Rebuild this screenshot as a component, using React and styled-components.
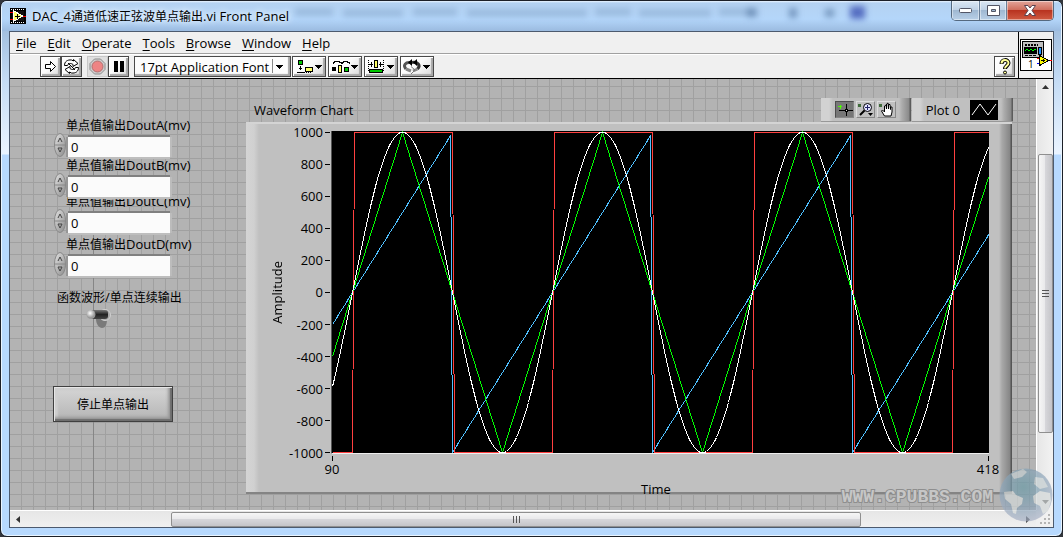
import React, { useState } from "react";
import { styled, createGlobalStyle } from "styled-components";

//^ GLOBAL
const GlobalStyle = createGlobalStyle`
  :root {
    --font-main: "Open Sans", "Noto Sans CJK SC", sans-serif;
    --bar-bg: #f0f0f0;
    --panel-bg: #b3b3b3;
    --panel-line: #a0a0a0;
    --chart-bg: #c0c0c0;
    --frame-dark: #4c5a6e;
  }

  * {
    margin: 0;
    padding: 0;
    box-sizing: border-box;
  }

  body {
    font-family: var(--font-main);
    font-size: 13px;
    color: #000;
    background-color: #33363c;
  }

  button, input, select {
    font-family: inherit;
    font-size: inherit;
    color: inherit;
  }

  svg {
    display: block;
  }
`;

//^ WINDOW
const Window = styled.div`
  display: flex;
  flex-direction: column;
  min-height: 100vh;
  padding: 0 8px 8px;
  border: 1px solid #1c2028;
  border-radius: 7px;
  overflow: hidden;
  background: linear-gradient(to bottom, #a9c8ea 0, #a3c0e0 30px, #c5dcf5 80px, #eaf4ff 153px, #b7d9fe 154px, #b7d9fe 100%);
  box-shadow: inset 0 0 0 1px #eaf5ff;
`;

const TitleBar = styled.header`
  display: flex;
  align-items: center;
  gap: 6px;
  height: 30px;
  margin: 0 -7px;
  padding-left: 8px;
  background: linear-gradient(to bottom, #eaf5ff 0, #b4d2f2 2px, #b4d6fa 18px, #9bbbe0 100%);
`;

const TitleText = styled.h1`
  font-size: 13px;
  font-weight: 400;
  line-height: 18px;
  white-space: nowrap;
  text-shadow: 0 0 6px #fff, 0 0 8px #e8f3ff;
`;

const Han = styled.span`
  font-family: "Noto Sans CJK SC", sans-serif;
  font-size: 12px;
`;

const Glass = styled.svg`
  flex: 1;
  min-width: 0;
  height: 28px;
  filter: blur(3px);
`;

const WindowButtons = styled.div`
  display: flex;
  align-self: flex-start;
  margin-right: 7px;
  border: 1px solid #55697f;
  border-top: none;
  border-radius: 0 0 5px 5px;
  overflow: hidden;
`;

const WindowButton = styled.button`
  display: flex;
  align-items: center;
  justify-content: center;
  width: ${(props) => (props.$close ? "47px" : "27px")};
  height: 19px;
  border: none;
  border-left: ${(props) => (props.$first ? "none" : "1px solid #6a7f98")};
  box-shadow: inset 0 0 0 1px rgba(255, 255, 255, 0.45);
  background: ${(props) =>
    props.$close
      ? "linear-gradient(to bottom, #e3a59a 0, #d0705f 45%, #b93320 50%, #cf5a42 100%)"
      : "linear-gradient(to bottom, #dbe7f4 0, #c0d2e6 45%, #9fb8d2 50%, #b9d0e8 100%)"};
`;

const Client = styled.div`
  display: flex;
  flex-direction: column;
  flex: 1;
  border: 1px solid var(--frame-dark);
  background-color: var(--bar-bg);
`;

//^ MENU AND TOOLBAR
const Head = styled.div`
  display: flex;
  border-bottom: 1px solid #000;
`;

const HeadRows = styled.div`
  flex: 1;
`;

const MenuBar = styled.nav`
  display: flex;
  align-items: center;
  gap: 11px;
  height: 22px;
  padding-left: 6px;
  border-bottom: 1px solid #a0a0a0;
`;

const MenuItem = styled.a`
  color: #000;
  line-height: 18px;
  text-decoration: none;

  u {
    text-underline-offset: 2px;
  }
`;

const ToolBar = styled.div`
  display: flex;
  align-items: center;
  gap: 2px;
  height: 24px;
  padding: 0 3px 0 30px;
  border-top: 1px solid #fff;
`;

const ToolGroup = styled.div`
  display: flex;
  margin-right: 3px;
`;

const ToolButton = styled.button`
  display: flex;
  align-items: center;
  justify-content: center;
  width: ${(props) => (props.$wide ? "34px" : "21px")};
  height: 21px;
  border: 1px solid ${(props) => (props.$flat ? "#c8c8c8" : "#4a4a4a")};
  background: ${(props) =>
    props.$flat ? "#e0e0e0" : "linear-gradient(135deg, #fff 0, #fafafa 50%, #d8d8d8 100%)"};
  box-shadow: ${(props) =>
    props.$flat ? "none" : "inset 1px 1px 0 #fff, inset -2px -2px 1px #a8a8a8"};
`;

const FontBox = styled.div`
  display: grid;
  width: 155px;
  margin-right: 1px;

  > * {
    grid-area: 1 / 1;
  }

  svg {
    place-self: center end;
    pointer-events: none;
  }
`;

const FontSelect = styled.select`
  appearance: none;
  height: 21px;
  padding: 0 20px 0 5px;
  line-height: 18px;
  border: 1px solid #4a4a4a;
  border-radius: 0;
  background-color: #fcfcfc;
  box-shadow: inset -2px -2px 1px #a8a8a8;
`;

const Spacer = styled.div`
  flex: 1;
`;

const ViIcon = styled.div`
  display: flex;
  align-items: center;
  justify-content: center;
  width: 35px;
  border-left: 1px solid #000;
`;

//^ WORKSPACE
const Workspace = styled.div`
  display: grid;
  grid-template-columns: minmax(0, 1fr) 17px;
  grid-template-rows: 1fr 17px;
  flex: 1;
`;

const Panel = styled.main`
  display: flex;
  align-items: flex-start;
  padding: 19px 23px 16px 43px;
  background-color: var(--panel-bg);
  background-image: linear-gradient(#868686, #868686),
    linear-gradient(to right, var(--panel-line) 1px, transparent 1px),
    linear-gradient(to bottom, var(--panel-line) 1px, transparent 1px);
  background-size: 1px 100%, 12px 12px, 12px 12px;
  background-position: 83px 0, 11px 7px, 11px 7px;
  background-repeat: no-repeat, repeat, repeat;
`;

const Controls = styled.section`
  display: flex;
  flex-direction: column;
  align-items: flex-start;
  flex: 0 0 193px;
  padding-top: 19px;
`;

const Field = styled.div`
  margin-top: ${(props) => props.$gap}px;
`;

const FieldLabel = styled.label`
  display: block;
  margin-left: ${(props) => (props.$mode ? "4px" : "13px")};
  line-height: 16px;
  white-space: nowrap;
`;

const FieldRow = styled.div`
  display: flex;
  align-items: flex-end;
  gap: 2px;
  height: 20px;
  margin-top: 4px;
  padding-left: 1px;
`;

const FieldInput = styled.input`
  position: relative;
  width: 102px;
  height: 20px;
  padding: 0 3px;
  border: none;
  outline: none;
  background-color: #fbfbfb;
  box-shadow: 0 -2px 0 #808080, -2px 0 0 #969696, 2px 0 0 #bcbcbc, 0 2px 0 #bebebe;
`;

const Switch = styled.label`
  display: block;
  margin: 4px 0 0 33px;
`;

const SwitchInput = styled.input`
  appearance: none;
  position: absolute;
`;

const StopButton = styled.button`
  width: 120px;
  height: 36px;
  margin-top: 57px;
  border: 1px solid #404040;
  background: linear-gradient(to bottom, #d6d6d6, #b4b4b4);
  box-shadow: inset 1px 1px 0 #e6e6e6, inset -2px -2px 1px #6e6e6e, inset -4px -4px 3px #999,
    inset 4px 4px 2px #cfcfcf;
`;

//^ CHART
const ChartSection = styled.section`
  flex: 1;
  min-width: 0;
`;

const ChartHeader = styled.div`
  display: flex;
  align-items: center;
  height: 24px;
`;

const ChartTitle = styled.h2`
  flex: 1;
  padding-left: 8px;
  font-size: 13px;
  font-weight: 400;
`;

const Bevel = styled.div`
  display: flex;
  align-items: center;
  gap: ${(props) => (props.$legend ? "10px" : "2px")};
  height: 24px;
  margin-left: 1px;
  padding: 0 15px 0 14px;
  border-bottom: 1px solid #989898;
  background: linear-gradient(to left, #5c5c5c 0, #5c5c5c 1px, #8a8a8a 2px, #acacac 9px, transparent 12px),
    linear-gradient(to right, #d2d2d2 0, #d2d2d2 8px, var(--chart-bg) 12px);
`;

const PaletteButton = styled.button`
  width: 19px;
  height: 17px;
  border: 1px solid;
  border-color: ${(props) => (props.$on ? "#4d4d4d #888 #888 #4d4d4d" : "#ddd #888 #888 #ddd")};
  background-color: ${(props) => (props.$on ? "#777" : "#c0c0c0")};
`;

const ChartBox = styled.div`
  display: grid;
  grid-template-columns: 26px 59px minmax(0, 1fr);
  margin-right: 1px;
  padding: 7px 23px 0 0;
  border-top: 2px solid #d4d4d4;
  border-bottom: 2px solid #848484;
  background: linear-gradient(to left, #555 0, #555 1px, #858585 2px, #a8a8a8 10px, transparent 13px),
    linear-gradient(to right, #d4d4d4 0, #d0d0d0 8px, var(--chart-bg) 13px);
`;

const AxisName = styled.div`
  align-self: center;
  justify-self: end;
  writing-mode: vertical-rl;
  transform: rotate(180deg);
  line-height: 18px;
  margin-right: -14px;
`;

const YAxis = styled.div`
  display: flex;
  flex-direction: column;
  justify-content: space-between;
  margin: -8px 0;
`;

const YTick = styled.div`
  display: flex;
  align-items: center;
  justify-content: flex-end;
  gap: 2px;
  height: 18px;

  &::after {
    content: "";
    width: 5px;
    height: 1px;
    margin-right: 1px;
    background-color: #000;
  }
`;

const Plot = styled.svg`
  width: 100%;
  height: 323px;
  background-color: #000;
  border-left: 1px solid #555;
  border-bottom: 1px solid #eee;
`;

const XAxis = styled.div`
  grid-column: 3;
  display: flex;
  justify-content: space-between;
  margin: 2px -13px 0;
`;

const XTick = styled.div`
  width: 28px;
  line-height: 14px;
  text-align: center;

  &::before {
    content: "";
    display: block;
    width: 1px;
    height: 5px;
    margin: 0 auto 1px;
    background-color: #000;
  }
`;

const TimeName = styled.div`
  grid-column: 3;
  margin: 6px 8px -4px 0;
  line-height: 14px;
  text-align: center;
`;

//^ SCROLLBARS
const VScroll = styled.div`
  display: flex;
  flex-direction: column;
  align-items: center;
  border-left: 1px solid #fff;
  background: linear-gradient(to right, #e6e6e6, #f2f2f2);
`;

const HScroll = styled.div`
  display: flex;
  align-items: center;
  border-top: 1px solid #fff;
  background: linear-gradient(to bottom, #e6e6e6, #f0f0f0);
`;

const Arrow = styled.button`
  display: flex;
  align-items: center;
  justify-content: center;
  width: 17px;
  height: 16px;
  border: none;
  background: transparent;
`;

const Track = styled.div`
  flex: ${(props) => props.$size} 0 0;
`;

const Thumb = styled.div`
  display: flex;
  align-items: center;
  justify-content: center;
  flex: ${(props) => props.$size} 0 0;
  border: 1px solid #8f8f8f;
  border-radius: 2px;
  ${(props) => (props.$vertical ? "width: 15px;" : "height: 15px;")}
  background: linear-gradient(
    ${(props) => (props.$vertical ? "to right" : "to bottom")},
    #f6f6f6 0, #e9e9eb 45%, #d6d6da 50%, #c4c4c8 100%
  );
`;

const Corner = styled.div`
  display: flex;
  align-items: flex-end;
  justify-content: flex-end;
  padding: 2px;
`;

//^ WATERMARK
const Watermark = styled.div`
  position: absolute;
  right: 10px;
  bottom: 15px;
  display: flex;
  align-items: center;
  gap: 6px;
  pointer-events: none;
`;

const WatermarkText = styled.span`
  margin-top: 4px;
  font-family: "Liberation Mono", monospace;
  font-size: 18px;
  font-weight: 700;
  line-height: 20px;
  color: #c6c6c6;
  paint-order: stroke fill;
  -webkit-text-stroke: 2px #8e8e8e;
`;

const menuItems = ["File", "Edit", "Operate", "Tools", "Browse", "Window", "Help"];
const yTicks = [1000, 800, 600, 400, 200, 0, -200, -400, -600, -800, -1000];

const outputs = [
  { id: "A", gap: 0 },
  { id: "B", gap: 0 },
  { id: "C", gap: -4 },
  { id: "D", gap: 3 },
];

// one sample is 2 units wide, one period is 100 samples
const START = 90;
const END = 418;

const waves = [
  {
    color: "#4fc0ff",
    value: (t) => (((t + 50) % 100) - 50) / 50,
  },
  {
    color: "#ff4040",
    value: (t) => (t % 100 >= 1 && t % 100 <= 50 ? 1 : -1),
  },
  {
    color: "#00ff00",
    value: (t) => {
      const p = t % 100;
      if (p <= 25) return p / 25;
      if (p <= 75) return 2 - p / 25;
      return p / 25 - 4;
    },
  },
  {
    color: "#ffffff",
    value: (t) => Math.sin((2 * Math.PI * t) / 100),
  },
];

function wavePoints(value) {
  const points = [];
  for (let t = START; t <= END; t++) {
    const x = (t - START) * 2 + 0.5;
    const y = 161.5 - Math.round(value(t) * 160);
    points.push(`${x},${y}`);
  }
  return points.join(" ");
}

function DropArrow({ x, y }) {
  return <path d={`M${x} ${y}h7v1h-1v1h-1v1h-1v1h-1v-1h-1v-1h-1v-1h-1z`} fill="#000" />;
}

function AppLogo() {
  return (
    <svg width="16" height="16" viewBox="0 0 16 16" shapeRendering="crispEdges">
      <rect width="16" height="16" fill="#000" />
      <path d="M1 1.500h14M1 14.500h14" stroke="#fff" strokeDasharray="1 1" />
      <rect x="2" y="3" width="12" height="10" fill="#111" />
      <path d="M3.500 2.500v11l9-5.500z" fill="#ffff66" stroke="#fff" />
      <path d="M5 8h5M7.500 5.500v5" stroke="#000" />
      <path d="M0 4.500h3M0 11.500h3M13 8h3" stroke="#f00" />
    </svg>
  );
}

function TitleGlass() {
  return (
    <Glass viewBox="0 0 650 28" preserveAspectRatio="none" aria-hidden="true">
      <path
        d="M0 10h38M48 11h60M118 10h44M172 11h120M300 10h36M344 11h72M424 10h34"
        fill="none"
        stroke="#6d8fb5"
        strokeWidth="7"
        opacity="0.4"
      />
      <path d="M452 6h10v9h-10zM494 6h8v10h-8zM530 7h9v8h-9z" fill="#4c6f9b" opacity="0.6" />
      <rect x="555" y="4" width="15" height="13" fill="#3d54b4" opacity="0.8" />
    </Glass>
  );
}

function RunIcon() {
  return (
    <svg width="17" height="15" viewBox="0 0 17 15">
      <path d="M3.500 5.500h5v-3l5 5-5 5v-3h-5z" fill="#fff" stroke="#000" />
    </svg>
  );
}

function RunLoopIcon() {
  return (
    <svg width="17" height="17" viewBox="0 0 17 17" fill="#fff" stroke="#000">
      <path d="M1.500 7.500c0-4 3-6 7-5.500l2 1V1.500l4.500 4-5 3V6.500C8 5 5.500 5 4.500 7.500z" />
      <path d="M15.500 9.500c0 4-3 6-7 5.500l-2-1v1.500l-4.500-4 5-3v2c2 1.500 4.500 1.500 5.500-1z" />
      <path d="M5 5l7 7" />
    </svg>
  );
}

function AbortIcon() {
  return (
    <svg width="17" height="17" viewBox="0 0 17 17">
      <path d="M5.500 1h6L16 5.500v6L11.500 16h-6L1 11.500v-6z" fill="#d0d0d0" stroke="#8c8c8c" />
      <circle cx="8.500" cy="8.500" r="5.500" fill="#ee8484" stroke="#b07070" />
    </svg>
  );
}

function PauseIcon() {
  return (
    <svg width="11" height="11" viewBox="0 0 11 11" shapeRendering="crispEdges">
      <path d="M1 0h4v11H1zM7 0h4v11H7z" />
    </svg>
  );
}

function AlignIcon() {
  return (
    <svg width="28" height="16" viewBox="0 0 28 16" shapeRendering="crispEdges">
      <rect x="3.500" y="1.500" width="4" height="4" fill="#00c800" stroke="#000" />
      <rect x="10.500" y="8.500" width="7" height="4" fill="#ffff66" stroke="#000" />
      <path d="M5.500 7v4M4 9.500h3M2 13.500h7" stroke="#000" />
      <path d="M9 13.500h7" stroke="#000" strokeDasharray="1 1" />
      <DropArrow x={20} y={6} />
    </svg>
  );
}

function DistributeIcon() {
  return (
    <svg width="28" height="16" viewBox="0 0 28 16" shapeRendering="crispEdges">
      <path d="M2 4.500v-1h1.500v-1h5v1H10v1M11 4.500v-1h1.500v-1h4v1H18v1" fill="none" stroke="#000" />
      <rect x="1" y="8" width="4" height="4" fill="#000" />
      <rect x="7.500" y="6.500" width="3" height="7" fill="#ffff66" stroke="#000" />
      <rect x="13.500" y="8.500" width="4" height="4" fill="#00c800" stroke="#000" />
      <DropArrow x={20} y={6} />
    </svg>
  );
}

function ResizeIcon() {
  return (
    <svg width="28" height="16" viewBox="0 0 28 16" shapeRendering="crispEdges">
      <path d="M1.500 1v11M16.500 1v11" stroke="#000" strokeDasharray="1 1" />
      <path d="M2 5.500h4M12 5.500h4M4.500 3v5M13.500 3v5" stroke="#000" />
      <rect x="7.500" y="1.500" width="3" height="7" fill="#ffff66" stroke="#000" />
      <rect x="2.500" y="10.500" width="13" height="3" fill="#00c800" stroke="#000" />
      <DropArrow x={20} y={6} />
    </svg>
  );
}

function ReorderIcon() {
  return (
    <svg width="28" height="16" viewBox="0 0 28 16">
      <path d="M3 10C-.5 6 3 3 7 3.500" fill="none" stroke="#555" strokeWidth="3" />
      <path d="M9 3.500c6-1 9 3 5.500 6.500" fill="none" stroke="#333" strokeWidth="3" />
      <path d="M9 0L5 3.500 9 7zM14 0l-4 3.500L14 7z" fill="#000" />
      <path d="M3 10l5 2M14.500 10L10 12" stroke="#888" strokeWidth="3" />
      <path d="M8 7.500l4 3.500-4 4" fill="none" stroke="#777" />
      <DropArrow x={20} y={6} />
    </svg>
  );
}

function HelpIcon() {
  return (
    <svg width="14" height="17" viewBox="0 0 14 17" fill="none">
      <path d="M3.500 6c0-5 7-5 7-1 0 2.500-3.500 3-3.500 6" stroke="#000" strokeWidth="4" />
      <path d="M3.500 5.500c0-4.500 7-4.500 7-.5 0 2.500-3.500 3-3.500 5.500" stroke="#ffff99" strokeWidth="2" />
      <circle cx="7" cy="14.500" r="1.500" fill="#ffff99" stroke="#000" />
    </svg>
  );
}

function ViDrawing() {
  return (
    <svg width="32" height="32" viewBox="0 0 32 32" shapeRendering="crispEdges">
      <rect x="0.500" y="0.500" width="31" height="31" fill="#fff" stroke="#000" />
      <rect x="2.500" y="2.500" width="21" height="16" fill="#c0c0c0" stroke="#000" />
      <path d="M5 5.500h13" stroke="#000" strokeWidth="2" strokeDasharray="2 1" />
      <rect x="4" y="8" width="13" height="7" fill="#000" />
      <path d="M5 12l2-2 2 2 2-2 2 2 2-2 1 1" fill="none" stroke="#0f0" />
      <path d="M5 16.500h11" stroke="#000" strokeDasharray="3 1" />
      <rect x="18.500" y="8.500" width="3" height="7" fill="#2090ff" stroke="#000" />
      <path d="M17 19.500h3M29 21.500h3" stroke="#f00" />
      <path d="M17 24.500h3" stroke="#00f" />
      <path d="M19.500 16.500v10l9-5z" fill="#ffff00" stroke="#000" />
      <path d="M21 21.500h4M23 20v3" stroke="#000" />
      <text x="8" y="29" fontSize="10">1</text>
    </svg>
  );
}

function Spinner() {
  return (
    <svg width="12" height="24" viewBox="0 0 12 24">
      <defs>
        <linearGradient id="knob" x1="0" y1="0" x2="1" y2="1">
          <stop offset="0" stopColor="#e2e2e2" />
          <stop offset="1" stopColor="#8a8a8a" />
        </linearGradient>
      </defs>
      <ellipse cx="6" cy="12" rx="5.500" ry="11.500" fill="url(#knob)" stroke="#888" />
      <path d="M1 12h10" stroke="#888" />
      <path d="M4 9l2-4 2 4M4 15h4l-2 4z" fill="none" stroke="#444" />
    </svg>
  );
}

function ToggleIcon() {
  return (
    <svg width="26" height="20" viewBox="0 0 26 20">
      <defs>
        <linearGradient id="lever" x1="0" y1="0" x2="0" y2="1">
          <stop offset="0" stopColor="#777" />
          <stop offset="0.5" stopColor="#222" />
          <stop offset="1" stopColor="#444" />
        </linearGradient>
        <radialGradient id="ball" cx="0.4" cy="0.35">
          <stop offset="0" stopColor="#fff" />
          <stop offset="1" stopColor="#999" />
        </radialGradient>
      </defs>
      <path d="M10 10h11c0 6-2 9-5 9s-6-4-6-9z" fill="#7a7a7a" />
      <circle cx="19" cy="6" r="5.500" fill="#a8a8a8" stroke="#d0d0d0" />
      <rect x="4" y="1" width="18" height="9" rx="3" fill="url(#lever)" />
      <circle cx="5" cy="5.500" r="4.500" fill="url(#ball)" />
    </svg>
  );
}

function Globe() {
  return (
    <svg width="54" height="54" viewBox="0 0 54 54" opacity="0.7">
      <defs>
        <radialGradient id="sea" cx="0.45" cy="0.35" r="0.65">
          <stop offset="0" stopColor="#6a9ba6" />
          <stop offset="0.6" stopColor="#8ba4b8" />
          <stop offset="1" stopColor="#a9b2c6" />
        </radialGradient>
      </defs>
      <circle cx="27" cy="27" r="26.500" fill="url(#sea)" />
      <path d="M5 24l9-1 3 4 7 3-1 6-5 4-1 6-3-1-2-9-6-5z" fill="#d3d8d8" />
      <path d="M34 28l7-5 10 2 1 8-3 10-5 3-3-8-6-3z" fill="#d3d8d8" />
      <path d="M12 6l12-5 4 3-5 5-8 2zM36 9l8 1 5 9-8 2-6-5z" fill="#c3cdd0" />
    </svg>
  );
}

function GripLines({ vertical }) {
  return (
    <svg width="9" height="9" viewBox="0 0 9 9" shapeRendering="crispEdges">
      <path
        d={vertical ? "M1 1.500h7M1 4.500h7M1 7.500h7" : "M1.500 1v7M4.500 1v7M7.500 1v7"}
        stroke="#555"
      />
    </svg>
  );
}

function ArrowIcon({ d }) {
  return (
    <svg width="7" height="7" viewBox="0 0 7 7">
      <path d={d} fill="#333" />
    </svg>
  );
}

function NumberField({ id, gap }) {
  const [value, setValue] = useState("0");

  return (
    <Field $gap={gap}>
      <FieldLabel htmlFor={`dout-${id}`}>
        <Han>单点值输出</Han>Dout{id}(mv)
      </FieldLabel>
      <FieldRow>
        <Spinner />
        <FieldInput
          id={`dout-${id}`}
          type="text"
          value={value}
          onChange={(e) => setValue(e.target.value)}
        />
      </FieldRow>
    </Field>
  );
}

function WaveformChart() {
  return (
    <ChartSection>
      <ChartHeader>
        <ChartTitle>Waveform Chart</ChartTitle>
        <Bevel>
          <PaletteButton $on aria-label="Cursor">
            <svg width="17" height="15" viewBox="0 0 17 15" shapeRendering="crispEdges">
              <path d="M2 4.500h4M4 3v4" stroke="#4cff00" />
              <path d="M3 8.500h14M10.500 2v12" stroke="#000" />
              <rect x="9.500" y="7.500" width="2" height="2" fill="#ddd" stroke="#000" />
            </svg>
          </PaletteButton>
          <PaletteButton aria-label="Zoom">
            <svg width="17" height="15" viewBox="0 0 17 15">
              <rect x="1" y="2" width="3" height="3" fill="#3f6b3a" />
              <circle cx="10.500" cy="5.500" r="4" fill="#e4e4ff" stroke="#000" />
              <path d="M8 5.500h5M10.500 3v5" stroke="#226" />
              <path d="M7.500 8.500L3 13" stroke="#000" strokeWidth="2" />
              <path d="M11 11h5l-2.500 3z" />
            </svg>
          </PaletteButton>
          <PaletteButton aria-label="Pan">
            <svg width="17" height="15" viewBox="0 0 17 15">
              <rect x="1" y="2" width="3" height="3" fill="#3f6b3a" />
              <path
                d="M6.500 14l-3-5 1-1 2 2V4l1.500-1 .5 4V2l1.500-1 .5 6V2.500l1.500 0 .5 5V5l1.500 0v5l-1 4z"
                fill="#fff"
                stroke="#000"
              />
            </svg>
          </PaletteButton>
        </Bevel>
        <Bevel $legend>
          <span>Plot 0</span>
          <svg width="28" height="20" viewBox="0 0 28 20">
            <rect width="28" height="20" fill="#000" />
            <path d="M2 15L10 4l8 11 8-11" fill="none" stroke="#fff" />
          </svg>
        </Bevel>
      </ChartHeader>
      <ChartBox>
        <AxisName>Amplitude</AxisName>
        <YAxis>
          {yTicks.map((tick) => (
            <YTick key={tick}>{tick}</YTick>
          ))}
        </YAxis>
        <Plot viewBox="0 0 657 322" preserveAspectRatio="none" role="img" aria-label="Waveforms">
          {waves.map((wave) => (
            <polyline
              key={wave.color}
              points={wavePoints(wave.value)}
              fill="none"
              stroke={wave.color}
              shapeRendering="crispEdges"
              vectorEffect="non-scaling-stroke"
            />
          ))}
        </Plot>
        <XAxis>
          <XTick>{START}</XTick>
          <XTick>{END}</XTick>
        </XAxis>
        <TimeName>Time</TimeName>
      </ChartBox>
    </ChartSection>
  );
}

export default function App() {
  return (
    <>
      <GlobalStyle />
      <Window>
        <TitleBar>
          <AppLogo />
          <TitleText>
            DAC_4<Han>通道低速正弦波单点输出</Han>.vi Front Panel
          </TitleText>
          <TitleGlass />
          <WindowButtons>
            <WindowButton $first aria-label="Minimize">
              <svg width="13" height="6" viewBox="0 0 13 6">
                <rect x="0.500" y="0.500" width="12" height="4" rx="1" fill="#fff" stroke="#535666" />
              </svg>
            </WindowButton>
            <WindowButton aria-label="Maximize">
              <svg width="13" height="11" viewBox="0 0 13 11">
                <path
                  d="M.5.5h12v10H.5zM4.500 4.500v2h4v-2z"
                  fill="#fff"
                  fillRule="evenodd"
                  stroke="#535666"
                />
              </svg>
            </WindowButton>
            <WindowButton $close aria-label="Close">
              <svg width="12" height="11" viewBox="0 0 12 11">
                <path
                  d="M.5.5h3.500l2 2.500L8 .5h3.500L8 5.500l3.500 5H8L6 8l-2 2.500H.5l3.500-5z"
                  fill="#fff"
                  stroke="#5b4350"
                />
              </svg>
            </WindowButton>
          </WindowButtons>
        </TitleBar>

        <Client>
          <Head>
            <HeadRows>
              <MenuBar>
                {menuItems.map((item) => (
                  <MenuItem key={item} href="#">
                    <u>{item[0]}</u>
                    {item.slice(1)}
                  </MenuItem>
                ))}
              </MenuBar>
              <ToolBar>
                <ToolGroup>
                  <ToolButton aria-label="Run"><RunIcon /></ToolButton>
                  <ToolButton aria-label="Run continuously"><RunLoopIcon /></ToolButton>
                </ToolGroup>
                <ToolGroup>
                  <ToolButton $flat aria-label="Abort"><AbortIcon /></ToolButton>
                  <ToolButton aria-label="Pause"><PauseIcon /></ToolButton>
                </ToolGroup>
                <FontBox>
                  <FontSelect aria-label="Font">
                    <option>17pt Application Font</option>
                  </FontSelect>
                  <svg width="19" height="19" viewBox="0 0 19 19" shapeRendering="crispEdges">
                    <path d="M0.500 2v14" stroke="#888" />
                    <DropArrow x={4} y={8} />
                  </svg>
                </FontBox>
                <ToolButton $wide aria-label="Align"><AlignIcon /></ToolButton>
                <ToolButton $wide aria-label="Distribute"><DistributeIcon /></ToolButton>
                <ToolButton $wide aria-label="Resize"><ResizeIcon /></ToolButton>
                <ToolButton $wide aria-label="Reorder"><ReorderIcon /></ToolButton>
                <Spacer />
                <ToolButton aria-label="Help"><HelpIcon /></ToolButton>
              </ToolBar>
            </HeadRows>
            <ViIcon>
              <ViDrawing />
            </ViIcon>
          </Head>

          <Workspace>
            <Panel>
              <Controls>
                {outputs.map((output) => (
                  <NumberField key={output.id} id={output.id} gap={output.gap} />
                ))}
                <Field $gap={13}>
                  <FieldLabel $mode htmlFor="mode">
                    <Han>函数波形</Han>/<Han>单点连续输出</Han>
                  </FieldLabel>
                  <Switch>
                    <SwitchInput id="mode" type="checkbox" />
                    <ToggleIcon />
                  </Switch>
                </Field>
                <StopButton>
                  <Han>停止单点输出</Han>
                </StopButton>
              </Controls>
              <WaveformChart />
            </Panel>

            <VScroll>
              <Arrow aria-label="Scroll up"><ArrowIcon d="M0 5l3.500-4L7 5z" /></Arrow>
              <Track $size={59} />
              <Thumb $vertical $size={279}><GripLines vertical /></Thumb>
              <Track $size={61} />
              <Arrow aria-label="Scroll down"><ArrowIcon d="M0 2l3.500 4L7 2z" /></Arrow>
            </VScroll>
            <HScroll>
              <Arrow aria-label="Scroll left"><ArrowIcon d="M5 0L1 3.500 5 7z" /></Arrow>
              <Track $size={144} />
              <Thumb $size={690}><GripLines /></Thumb>
              <Track $size={158} />
              <Arrow aria-label="Scroll right"><ArrowIcon d="M2 0l4 3.500L2 7z" /></Arrow>
            </HScroll>
            <Corner>
              <svg width="11" height="11" viewBox="0 0 11 11" shapeRendering="crispEdges">
                <path d="M8 0h2v2H8zM4 4h2v2H4zM8 4h2v2H8zM0 8h2v2H0zM4 8h2v2H4zM8 8h2v2H8z" fill="#b4b4b4" />
              </svg>
            </Corner>
          </Workspace>
        </Client>
        <Watermark>
          <WatermarkText>WWW.CPUBBS.COM</WatermarkText>
          <Globe />
        </Watermark>
      </Window>
    </>
  );
}
